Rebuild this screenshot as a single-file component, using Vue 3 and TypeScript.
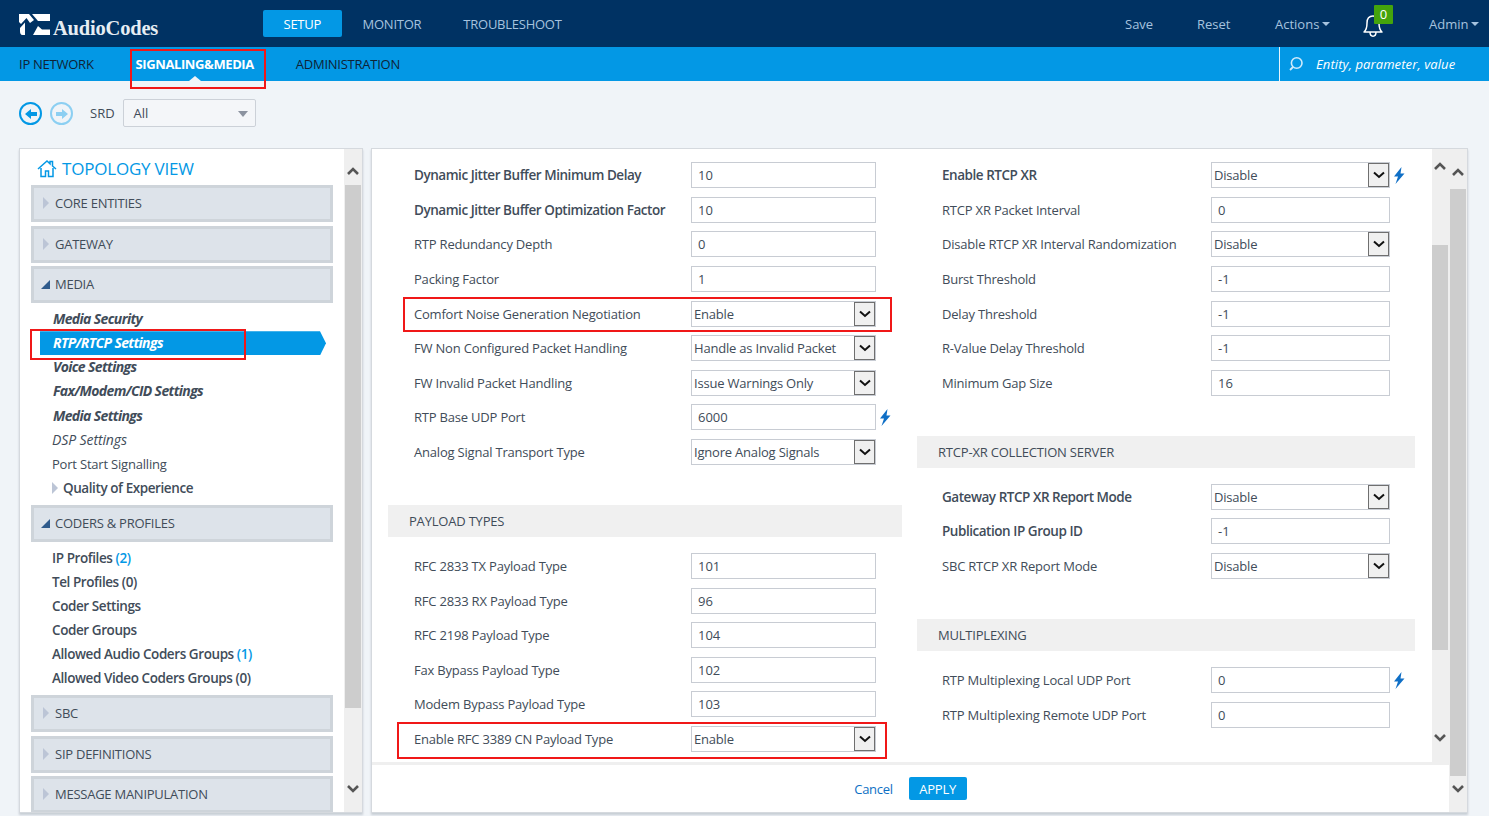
<script setup lang="ts">
interface Field {
  label: string
  value: string
  kind?: 'select'
  bold?: boolean
  bolt?: boolean
}

interface Block {
  title?: string
  fields: Field[]
}

interface TreeItem {
  label: string
  count?: string
  style?: 'em' | 'strong' | 'plain' | 'dim' | 'sub'
  active?: boolean
}

interface TreeGroup {
  label: string
  open?: boolean
  items?: TreeItem[]
}

const tree: TreeGroup[] = [
  { label: 'CORE ENTITIES' },
  { label: 'GATEWAY' },
  {
    label: 'MEDIA',
    open: true,
    items: [
      { label: 'Media Security', style: 'em' },
      { label: 'RTP/RTCP Settings', style: 'em', active: true },
      { label: 'Voice Settings', style: 'em' },
      { label: 'Fax/Modem/CID Settings', style: 'em' },
      { label: 'Media Settings', style: 'em' },
      { label: 'DSP Settings', style: 'dim' },
      { label: 'Port Start Signalling', style: 'plain' },
      { label: 'Quality of Experience', style: 'sub' },
    ],
  },
  {
    label: 'CODERS & PROFILES',
    open: true,
    items: [
      { label: 'IP Profiles', count: '(2)', style: 'strong' },
      { label: 'Tel Profiles (0)', style: 'strong' },
      { label: 'Coder Settings', style: 'strong' },
      { label: 'Coder Groups', style: 'strong' },
      { label: 'Allowed Audio Coders Groups', count: '(1)', style: 'strong' },
      { label: 'Allowed Video Coders Groups (0)', style: 'strong' },
    ],
  },
  { label: 'SBC' },
  { label: 'SIP DEFINITIONS' },
  { label: 'MESSAGE MANIPULATION' },
]

const leftBlocks: Block[] = [
  {
    fields: [
      { label: 'Dynamic Jitter Buffer Minimum Delay', value: '10', bold: true },
      { label: 'Dynamic Jitter Buffer Optimization Factor', value: '10', bold: true },
      { label: 'RTP Redundancy Depth', value: '0' },
      { label: 'Packing Factor', value: '1' },
      { label: 'Comfort Noise Generation Negotiation', value: 'Enable', kind: 'select' },
      { label: 'FW Non Configured Packet Handling', value: 'Handle as Invalid Packet', kind: 'select' },
      { label: 'FW Invalid Packet Handling', value: 'Issue Warnings Only', kind: 'select' },
      { label: 'RTP Base UDP Port', value: '6000', bolt: true },
      { label: 'Analog Signal Transport Type', value: 'Ignore Analog Signals', kind: 'select' },
    ],
  },
  {
    title: 'PAYLOAD TYPES',
    fields: [
      { label: 'RFC 2833 TX Payload Type', value: '101' },
      { label: 'RFC 2833 RX Payload Type', value: '96' },
      { label: 'RFC 2198 Payload Type', value: '104' },
      { label: 'Fax Bypass Payload Type', value: '102' },
      { label: 'Modem Bypass Payload Type', value: '103' },
      { label: 'Enable RFC 3389 CN Payload Type', value: 'Enable', kind: 'select' },
    ],
  },
]

const rightBlocks: Block[] = [
  {
    fields: [
      { label: 'Enable RTCP XR', value: 'Disable', kind: 'select', bold: true, bolt: true },
      { label: 'RTCP XR Packet Interval', value: '0' },
      { label: 'Disable RTCP XR Interval Randomization', value: 'Disable', kind: 'select' },
      { label: 'Burst Threshold', value: '-1' },
      { label: 'Delay Threshold', value: '-1' },
      { label: 'R-Value Delay Threshold', value: '-1' },
      { label: 'Minimum Gap Size', value: '16' },
    ],
  },
  {
    title: 'RTCP-XR COLLECTION SERVER',
    fields: [
      { label: 'Gateway RTCP XR Report Mode', value: 'Disable', kind: 'select', bold: true },
      { label: 'Publication IP Group ID', value: '-1', bold: true },
      { label: 'SBC RTCP XR Report Mode', value: 'Disable', kind: 'select' },
    ],
  },
  {
    title: 'MULTIPLEXING',
    fields: [
      { label: 'RTP Multiplexing Local UDP Port', value: '0', bolt: true },
      { label: 'RTP Multiplexing Remote UDP Port', value: '0' },
    ],
  },
]

const columns = [
  { key: 'left', blocks: leftBlocks },
  { key: 'right', blocks: rightBlocks },
]
</script>

<template>
  <div class="page">
    <header class="topbar">
      <div class="logo">
        <svg width="31" height="21" viewBox="0 0 31 21">
          <path d="M0 0H10L15 6L11 9L7.500 4L2 10L0 8Z" fill="#fff" />
          <path d="M1 14L6 8.500V21H3.500C1.500 21 1 19 1 17Z" fill="#fff" />
          <path d="M13 0H31V7H19Z" fill="#fff" />
          <path d="M14 21L19 12L23 15.500H31V21Z" fill="#fff" />
        </svg>
        <span class="logo-text">AudioCodes</span>
      </div>
      <nav class="main-nav">
        <a class="main-link on">SETUP</a>
        <a class="main-link">MONITOR</a>
        <a class="main-link">TROUBLESHOOT</a>
      </nav>
      <div class="top-actions">
        <a class="save">Save</a>
        <a class="reset">Reset</a>
        <a class="actions">Actions<i class="caret" /></a>
        <span class="bell">
          <svg width="24" height="26" viewBox="0 0 24 26">
            <path d="M3 20c2.500-2 3-4.500 3-9 0-4 2-7 6-7s6 3 6 7c0 4.500 .5 7 3 9z M9 20c0 5.500 6 5.500 6 0" fill="none" stroke="#fff" stroke-width="1.500" stroke-linejoin="round" />
          </svg>
          <b class="badge">0</b>
        </span>
        <a class="admin">Admin<i class="caret" /></a>
      </div>
    </header>

    <div class="subbar">
      <nav class="sub-nav">
        <a class="sub-link">IP NETWORK</a>
        <a class="sub-link on">SIGNALING&amp;MEDIA</a>
        <a class="sub-link">ADMINISTRATION</a>
      </nav>
      <div class="search">
        <svg width="16" height="16" viewBox="0 0 16 16">
          <circle cx="8.700" cy="7" r="5.300" fill="none" stroke="#cfeafb" stroke-width="1.600" />
          <path d="M5 11l-3 3" stroke="#cfeafb" stroke-width="1.800" />
        </svg>
        <em>Entity, parameter, value</em>
      </div>
    </div>

    <div class="toolbar">
      <span class="round">
        <svg width="14" height="12" viewBox="0 0 14 12"><path d="M1 6l6-5v3h6v4H7v3z" fill="#0398e5" /></svg>
      </span>
      <span class="round off">
        <svg width="14" height="12" viewBox="0 0 14 12"><path d="M13 6L7 1v3H1v4h6v3z" fill="#8ccff2" /></svg>
      </span>
      <span class="srd">SRD</span>
      <span class="srd-select">All<i class="srd-caret" /></span>
    </div>

    <main class="content">
      <aside class="panel tree-panel">
        <div class="tree">
          <h2 class="tree-title">
            <svg width="20" height="19" viewBox="0 0 20 19">
              <path d="M1 10l9-8 3 2.700V2.500h2.500V7L19 10M4 9v8.500h4.500V12h3v5.500H16V9" fill="none" stroke="#0398e5" stroke-width="1.500" />
            </svg>
            TOPOLOGY VIEW
          </h2>
          <section v-for="group in tree" :key="group.label">
            <div class="group-head">
              <i :class="group.open ? 'tri-open' : 'tri-closed'" />
              {{ group.label }}
            </div>
            <ul v-if="group.items" class="items">
              <li
                v-for="item in group.items"
                :key="item.label"
                class="item"
                :class="[item.style, { active: item.active }]"
              >
                <i v-if="item.style === 'sub'" class="tri-closed small" />
                {{ item.label }}
                <span v-if="item.count" class="count">{{ item.count }}</span>
              </li>
            </ul>
          </section>
        </div>
        <div class="scroll tree-scroll">
          <svg class="chev up" width="14" height="10" viewBox="0 0 14 10"><path d="M2 8l5-5 5 5" fill="none" stroke="#555" stroke-width="2.600" /></svg>
          <div class="track"><div class="thumb" /></div>
          <svg class="chev down" width="14" height="10" viewBox="0 0 14 10"><path d="M2 2l5 5 5-5" fill="none" stroke="#555" stroke-width="2.600" /></svg>
        </div>
      </aside>

      <section class="panel form-panel">
        <div class="form-main">
          <div class="form-top">
            <div class="form-cols">
              <div v-for="col in columns" :key="col.key" class="col" :class="col.key">
                <div v-for="(block, i) in col.blocks" :key="i" class="block">
                  <h3 v-if="block.title" class="block-title">{{ block.title }}</h3>
                  <div v-for="field in block.fields" :key="field.label" class="row">
                    <label class="row-label" :class="{ bold: field.bold }">{{ field.label }}</label>
                    <div v-if="field.kind === 'select'" class="select">
                      {{ field.value }}
                      <span class="select-btn">
                        <svg width="12" height="8" viewBox="0 0 12 8"><path d="M1 1.500l5 4.500 5-4.500" fill="none" stroke="#111" stroke-width="2" /></svg>
                      </span>
                    </div>
                    <div v-else class="input">{{ field.value }}</div>
                    <svg v-if="field.bolt" class="bolt" width="12" height="17" viewBox="0 0 12 17">
                      <path d="M8.500 0L1 9.500h4L2.500 17 11.500 6.500H7.500z" fill="#0f6fc6" />
                    </svg>
                  </div>
                </div>
              </div>
            </div>
            <div class="scroll inner">
              <svg class="chev up" width="14" height="10" viewBox="0 0 14 10"><path d="M2 8l5-5 5 5" fill="none" stroke="#555" stroke-width="2.600" /></svg>
              <div class="track"><div class="thumb" /></div>
              <svg class="chev down" width="14" height="10" viewBox="0 0 14 10"><path d="M2 2l5 5 5-5" fill="none" stroke="#555" stroke-width="2.600" /></svg>
            </div>
          </div>
          <footer class="form-foot">
            <a class="cancel">Cancel</a>
            <button class="apply">APPLY</button>
          </footer>
        </div>
        <div class="scroll outer">
          <svg class="chev up" width="14" height="10" viewBox="0 0 14 10"><path d="M2 8l5-5 5 5" fill="none" stroke="#555" stroke-width="2.600" /></svg>
          <div class="track"><div class="thumb" /></div>
          <svg class="chev down" width="14" height="10" viewBox="0 0 14 10"><path d="M2 2l5 5 5-5" fill="none" stroke="#555" stroke-width="2.600" /></svg>
        </div>
      </section>
    </main>

    <!-- red marks drawn over the screenshot -->
    <i class="mark mark-nav" />
    <i class="mark mark-tree" />
    <i class="mark mark-noise" />
    <i class="mark mark-cn" />
  </div>
</template>

<style>
html,
body {
  margin: 0;
  background: #f0f4f8;
}
</style>

<style scoped>
.page {
  position: relative;
  width: 1489px;
  height: 816px;
  overflow: hidden;
  background: #f0f4f8;
  font-family: 'Open Sans', 'Liberation Sans', sans-serif;
  font-size: 13px;
  color: #414c59;
}

.topbar {
  height: 47px;
  display: flex;
  align-items: center;
  background: #003263;
}

.logo {
  width: 263px;
  padding: 6px 0 0 19px;
  box-sizing: border-box;
  display: flex;
  align-items: center;
  color: #fff;
}

.logo svg {
  margin-top: -5px;
}

.logo-text {
  margin: 3px 0 0 3px;
  font-family: 'Liberation Serif', serif;
  font-size: 20.500px;
  line-height: 24px;
  letter-spacing: -0.200px;
  font-weight: 700;
  color: #e6edf3;
}

.main-nav {
  display: flex;
  align-items: center;
}

.main-link {
  height: 27px;
  line-height: 28px;
  padding: 0 21px;
  border-radius: 2px;
  font-size: 13px;
  letter-spacing: -0.250px;
  color: #a6c3df;
}

.main-link.on {
  padding: 0 20.500px;
  background: #0398e5;
  color: #fff;
}

.top-actions {
  margin-left: auto;
  position: relative;
  height: 47px;
  width: 380px;
  font-size: 13px;
  color: #a6c3df;
}

.top-actions > a,
.bell {
  position: absolute;
  top: 0;
  line-height: 48px;
}

.save { left: 16px; }
.reset { left: 88px; }
.actions { left: 166px; }
.bell { left: 252px; }
.admin { left: 320px; }

.caret {
  display: inline-block;
  margin-left: 3px;
  vertical-align: 3px;
  border: 4px solid transparent;
  border-top: 4px solid #a6c3df;
  border-bottom: 0;
}

.bell svg {
  position: absolute;
  top: 12px;
  left: 0;
}

.badge {
  position: absolute;
  top: 5px;
  left: 13px;
  width: 19px;
  height: 19px;
  border-radius: 1px;
  background: #44a40c;
  color: #fff;
  font-size: 13px;
  font-weight: 400;
  line-height: 19px;
  text-align: center;
}

.subbar {
  height: 34px;
  display: flex;
  justify-content: space-between;
  background: #0398e5;
}

.sub-nav {
  display: flex;
  padding-left: 19px;
  gap: 42px;
}

.sub-link {
  line-height: 34px;
  font-size: 13px;
  letter-spacing: -0.250px;
  color: #0f2336;
}

.sub-link.on {
  position: relative;
  font-weight: 700;
  letter-spacing: -0.400px;
  color: #fff;
}

.sub-link.on::after {
  content: '';
  position: absolute;
  left: 50%;
  bottom: 0;
  margin-left: -6px;
  border: 6px solid transparent;
  border-bottom: 5px solid #f0f4f8;
  border-top: 0;
}

.search {
  width: 210px;
  border-left: 1px solid #e6f4fc;
  display: flex;
  align-items: center;
  gap: 12px;
  padding-left: 8px;
  box-sizing: border-box;
  color: #fff;
  font-size: 13px;
  letter-spacing: 0.100px;
}

.toolbar {
  height: 67px;
  padding: 18px 0 0 19px;
  box-sizing: border-box;
  display: flex;
  align-items: flex-start;
}

.round {
  width: 23px;
  height: 23px;
  margin: 3px 8px 0 0;
  box-sizing: border-box;
  border: 2px solid #0398e5;
  border-radius: 50%;
  display: flex;
  align-items: center;
  justify-content: center;
}

.round.off {
  border-color: #8ccff2;
}

.srd {
  margin-left: 9px;
  line-height: 28px;
  font-size: 13px;
}

.srd-select {
  position: relative;
  margin-left: 8px;
  width: 133px;
  height: 28px;
  box-sizing: border-box;
  border: 1px solid #ccd1d8;
  border-radius: 2px;
  padding-left: 10px;
  line-height: 27px;
  background: #f4f6f9;
}

.srd-caret {
  position: absolute;
  right: 7px;
  top: 11px;
  border: 5px solid transparent;
  border-top: 6px solid #8c93a0;
  border-bottom: 0;
}

.content {
  display: flex;
  gap: 8px;
  padding-left: 19px;
  height: 665px;
}

.panel {
  box-sizing: border-box;
  background: #fff;
  border: 1px solid #d5d9de;
  box-shadow: 0 2px 2px #c8ced5;
  display: flex;
  overflow: hidden;
}

.tree-panel {
  width: 344px;
}

.tree {
  flex: 1;
  min-width: 0;
  padding: 0 11px;
  overflow: hidden;
}

.tree-title {
  margin: 0;
  height: 35.800px;
  padding: 3px 0 0 6px;
  box-sizing: border-box;
  display: flex;
  align-items: center;
  gap: 5px;
  font-size: 17px;
  font-weight: 400;
  letter-spacing: -0.200px;
  color: #0398e5;
}

.group-head {
  height: 37px;
  margin-bottom: 3.800px;
  box-sizing: border-box;
  border: 3px solid #ced4da;
  background: #dde3ea;
  padding-left: 21px;
  position: relative;
  line-height: 31px;
  font-size: 13px;
  letter-spacing: -0.250px;
}

.tri-closed {
  position: absolute;
  left: 9px;
  top: 9px;
  border: 6px solid transparent;
  border-left: 6px solid #bcc5d6;
  border-right: 0;
}

.tri-closed.small {
  position: absolute;
  left: 21px;
  top: 6px;
}

.tri-open {
  position: absolute;
  left: 7px;
  top: 11px;
  border-style: solid;
  border-width: 0 0 9px 9px;
  border-color: transparent transparent #2f5b8c transparent;
}

.items {
  list-style: none;
  margin: 0;
  padding: 0 0 4.800px;
}

.item {
  position: relative;
  height: 24.100px;
  line-height: 24px;
  padding-left: 21px;
  font-size: 13px;
  letter-spacing: -0.200px;
  white-space: nowrap;
}

.item.em {
  padding-left: 22px;
  font-size: 14px;
  font-style: italic;
  font-weight: 700;
  letter-spacing: -0.630px;
}

.item.strong {
  font-size: 13.500px;
  font-weight: 600;
  letter-spacing: -0.420px;
}

.item.dim {
  font-size: 14px;
  font-style: italic;
  letter-spacing: -0.100px;
}

.item.sub {
  padding-left: 32px;
  font-size: 13.500px;
  font-weight: 600;
  letter-spacing: -0.420px;
}

.count {
  color: #0398e5;
}

.item.active {
  margin-left: 9px;
  margin-right: 7px;
  padding-left: 13px;
  color: #fff;
  background: #0398e5;
  clip-path: polygon(0 0, calc(100% - 6px) 0, 100% 50%, calc(100% - 6px) 100%, 0 100%);
}

.scroll {
  width: 18px;
  flex: none;
  background: #efefef;
  display: flex;
  flex-direction: column;
  align-items: center;
}

.chev {
  flex: none;
}

.track {
  flex: 1;
  width: 100%;
  position: relative;
}

.thumb {
  position: absolute;
  left: 1px;
  right: 1px;
  background: #cdcdcd;
}

.tree-scroll .up { margin: 17px 0 4px; }
.tree-scroll .down { margin: 0 0 18px; }
.tree-scroll .thumb { top: 5px; height: 523px; }

.inner { width: 17px; }
.inner .up { margin: 12px 1px 5px 0; }
.inner .down { margin: 0 1px 19px 0; }
.inner .thumb { top: 69px; height: 405px; left: 0; }

.outer .up { margin: 18px 0 5px; }
.outer .down { margin: 0 0 18px; }
.outer .thumb { top: 7px; height: 587px; }

.form-panel {
  width: 1097px;
}

.form-main {
  flex: 1;
  min-width: 0;
  display: flex;
  flex-direction: column;
}

.form-top {
  flex: 1;
  min-height: 0;
  display: flex;
}

.form-cols {
  flex: 1;
  min-width: 0;
  display: flex;
  gap: 15px;
  padding: 9px 17px 0 16px;
  overflow: hidden;
}

.col {
  flex: none;
}

.col.left {
  width: 514px;
}

.col.right {
  width: 498px;
}

.block-title {
  margin: 0;
  height: 32px;
  line-height: 32px;
  padding-left: 21px;
  background: #f0f0f0;
  font-size: 13px;
  font-weight: 400;
  letter-spacing: -0.200px;
}

.block {
  margin-bottom: 36px;
}

.block + .block .block-title {
  margin-bottom: 11.400px;
}

.row {
  height: 34.600px;
  display: flex;
  align-items: center;
}

.row-label {
  flex: none;
  padding-left: 26px;
  width: 277px;
  font-size: 13px;
  letter-spacing: -0.200px;
  white-space: nowrap;
}

.col.right .row-label {
  padding-left: 25px;
  width: 269px;
}

.row-label.bold {
  font-size: 13.500px;
  font-weight: 600;
  letter-spacing: -0.460px;
}

.col.left .input,
.col.left .select {
  width: 185px;
}

.col.right .input,
.col.right .select {
  width: 179px;
}

.input,
.select {
  position: relative;
  flex: none;
  height: 26px;
  box-sizing: border-box;
  border: 1px solid #c8ccd3;
  line-height: 24px;
  font-size: 13px;
}

.input {
  padding-left: 6px;
}

.select {
  padding-left: 2px;
  letter-spacing: -0.200px;
}

.select-btn {
  position: absolute;
  right: 0;
  top: 0;
  bottom: 0;
  width: 21px;
  box-sizing: border-box;
  border: 1px solid #6f6f6f;
  background: #f0f0f0;
  display: flex;
  align-items: center;
  justify-content: center;
}

.bolt {
  margin-left: 3px;
}

.form-foot {
  flex: none;
  height: 50px;
  border-top: 3px solid #efefef;
  box-sizing: border-box;
  display: flex;
  justify-content: center;
  align-items: center;
  gap: 16px;
}

.cancel {
  color: #0d6fc4;
  font-size: 13px;
  letter-spacing: -0.300px;
}

.apply {
  width: 58px;
  height: 23px;
  border: 0;
  border-radius: 2px;
  background: #0398e5;
  color: #fff;
  font: inherit;
  font-size: 13px;
  letter-spacing: -0.200px;
  padding: 0;
}

.mark {
  position: absolute;
  box-sizing: border-box;
  border: 2px solid #f01818;
}

.mark-nav { left: 130px; top: 49px; width: 136px; height: 40px; }
.mark-tree { left: 30px; top: 329px; width: 216px; height: 31px; }
.mark-noise { left: 403px; top: 297px; width: 489px; height: 35px; }
.mark-cn { left: 397px; top: 722px; width: 490px; height: 37px; }
</style>
